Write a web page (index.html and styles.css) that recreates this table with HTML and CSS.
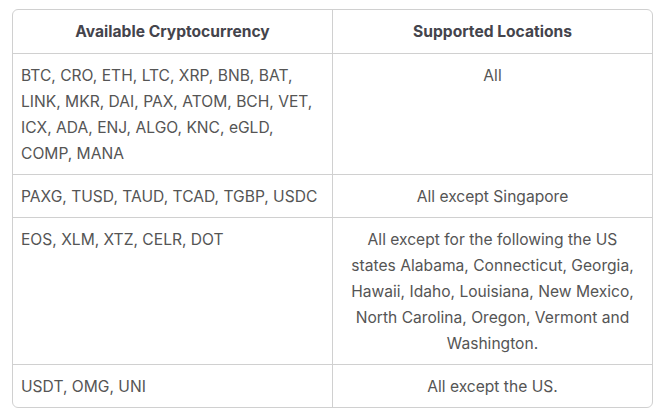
FILE: index.html
```html
<!DOCTYPE html>
<html>
<head>
<meta charset="utf-8">
<link rel="stylesheet" href="styles.css">
</head>
<body>
<div class="table">
  <div class="cell head left">Available Cryptocurrency</div>
  <div class="cell head">Supported Locations</div>

  <div class="cell left">BTC, CRO, ETH, LTC, XRP, BNB, BAT, LINK, MKR, DAI, PAX, ATOM, BCH, VET, ICX, ADA, ENJ, ALGO, KNC, eGLD, COMP, MANA</div>
  <div class="cell center">All</div>

  <div class="cell left">PAXG, TUSD, TAUD, TCAD, TGBP, USDC</div>
  <div class="cell center">All except Singapore</div>

  <div class="cell left">EOS, XLM, XTZ, CELR, DOT</div>
  <div class="cell center">All except for the following the US states Alabama, Connecticut, Georgia, Hawaii, Idaho, Louisiana, New Mexico, North Carolina, Oregon, Vermont and Washington.</div>

  <div class="cell left last">USDT, OMG, UNI</div>
  <div class="cell center last">All except the US.</div>
</div>
</body>
</html>
```
FILE: styles.css
```css
html, body {
  margin: 0;
  padding: 0;
  background: #fff;
}
body {
  padding: 9px 0 0 12px;
  font-family: Inter, "Liberation Sans", sans-serif;
  font-size: 15.6px;
  line-height: 26px;
  color: #555;
}
.table {
  box-sizing: border-box;
  width: 641px;
  border: 1px solid #d0d0d0;
  border-radius: 6px;
  display: grid;
  grid-template-columns: 320px 1fr;
}
.cell {
  padding: 9px 8px 7px;
  border-bottom: 1px solid #d0d0d0;
}
.cell.left {
  border-right: 1px solid #d0d0d0;
}
.cell.last {
  border-bottom: none;
}
.cell.head {
  padding: 9px 8px 8px;
  text-align: center;
  font-weight: 650;
  color: #44444c;
}
.cell.center {
  padding: 9px 17px 7px;
  text-align: center;
}
```
